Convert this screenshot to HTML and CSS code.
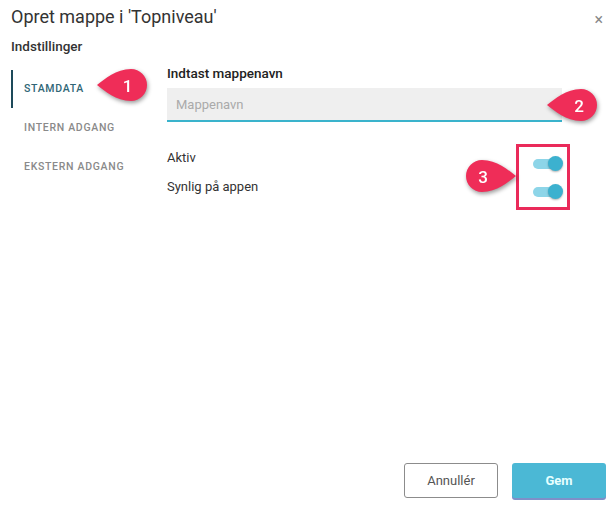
FILE: index.html
```html
<!DOCTYPE html>
<html lang="da">
<head>
  <meta charset="UTF-8" />
  <title>Opret mappe</title>
  <link rel="stylesheet" href="styles.css">
</head>
<body>
  <div class="dialog">
    <div class="dialog-head">
      <h2 class="title">Opret mappe i 'Topniveau'</h2>
      <span class="close">&times;</span>
    </div>
    <h3 class="subtitle">Indstillinger</h3>

    <div class="dialog-body">
      <nav class="tabs">
        <div class="tab active">STAMDATA
          <svg class="marker marker-1" width="56" height="40" viewBox="0 0 56 40">
            <path d="M1,17 C9,11 20,1 35,1 A16,16 0 0 1 35,33 C20,33 9,23 1,17 Z" />
            <text x="32" y="23.5">1</text>
          </svg>
        </div>
        <div class="tab">INTERN ADGANG</div>
        <div class="tab">EKSTERN ADGANG</div>
      </nav>

      <section class="fields">
        <label class="field-label" for="name">Indtast mappenavn</label>
        <div class="input-wrap">
          <input id="name" class="text-input" placeholder="Mappenavn">
          <svg class="marker marker-2" width="56" height="40" viewBox="0 0 56 40">
            <path d="M1,17 C9,11 20,1 35,1 A16,16 0 0 1 35,33 C20,33 9,23 1,17 Z" />
            <text x="33" y="23.5">2</text>
          </svg>
        </div>

        <div class="switches">
          <div class="switch-labels">
            <div class="switch-row">Aktiv</div>
            <div class="switch-row">Synlig på appen</div>
          </div>
          <div class="switch-box">
            <span class="toggle"><span class="thumb"></span></span>
            <span class="toggle"><span class="thumb"></span></span>
            <svg class="marker marker-3" width="56" height="40" viewBox="0 0 56 40">
              <path d="M55,17 C47,11 36,1 21,1 A16,16 0 0 0 21,33 C36,33 47,23 55,17 Z" />
              <text x="22" y="23.5">3</text>
            </svg>
          </div>
        </div>
      </section>
    </div>

    <div class="dialog-foot">
      <button class="btn btn-cancel">Annullér</button>
      <button class="btn btn-save">Gem</button>
    </div>
  </div>
</body>
</html>
```

FILE: styles.css
```css
body {
  margin: 0;
  font-family: Roboto, 'Noto Sans', sans-serif;
  background: #fff;
  color: #333;
}
.dialog {
  height: 510px;
  box-sizing: border-box;
  padding: 5px 10px 12px 11px;
  display: flex;
  flex-direction: column;
}
.dialog-head {
  display: flex;
  justify-content: space-between;
  align-items: center;
}
.title {
  margin: 0;
  font-size: 18px;
  font-weight: 400;
  line-height: 24px;
  color: #333;
}
.close {
  font-size: 16px;
  color: #888;
  margin-right: 3px;
  margin-top: 4px;
}
.subtitle {
  margin: 8px 0 0;
  font-size: 13.5px;
  font-weight: 500;
  line-height: 18px;
  color: #333;
}
.dialog-body {
  flex: 1;
  display: flex;
  margin-top: 15px;
}
.tabs {
  width: 156px;
  flex-shrink: 0;
}
.tab {
  position: relative;
  height: 38px;
  line-height: 38px;
  padding-left: 13px;
  margin-bottom: 1px;
  font-size: 10.5px;
  font-weight: 500;
  letter-spacing: 0.7px;
  color: #8a8a8a;
}
.tab.active {
  color: #2f6676;
  border-left: 2px solid #1d4a5a;
  padding-left: 11px;
}
.fields {
  flex: 1;
  padding-right: 44px;
}
.field-label {
  display: block;
  font-size: 13.5px;
  font-weight: 500;
  line-height: 18px;
  margin-top: -6px;
  color: #222;
}
.input-wrap {
  position: relative;
  margin-top: 6px;
}
.text-input {
  display: block;
  width: 100%;
  box-sizing: border-box;
  height: 34px;
  border: 0;
  border-bottom: 2px solid #3ab3cc;
  background: #efefef;
  padding: 0 9px;
  font-family: inherit;
  font-size: 13px;
  color: #333;
}
.text-input::placeholder {
  color: #aaa;
}
.switches {
  display: flex;
  justify-content: space-between;
  margin-top: 21px;
}
.switch-row {
  height: 29px;
  line-height: 29px;
  font-size: 13px;
  color: #333;
}
.switch-box {
  position: relative;
  box-sizing: border-box;
  width: 54px;
  height: 66px;
  border: 3px solid #ea2a5a;
  margin-top: 1px;
  margin-right: -8px;
  display: flex;
  flex-direction: column;
  align-items: flex-end;
  padding: 12px 6px 0 0;
  gap: 18px;
}
.toggle {
  position: relative;
  display: block;
  width: 28px;
  height: 10px;
  border-radius: 5px;
  background: #8dd5e8;
}
.thumb {
  position: absolute;
  right: -2px;
  top: -3px;
  width: 15px;
  height: 15px;
  border-radius: 50%;
  background: #3cb1cf;
  box-shadow: 0 1px 2px rgba(0, 0, 0, 0.3);
}
.marker {
  position: absolute;
  overflow: visible;
  filter: drop-shadow(1px 2px 2px rgba(0, 0, 0, 0.4));
}
.marker path {
  fill: #ef2d58;
}
.marker text {
  fill: #fff;
  font-family: Roboto, sans-serif;
  font-size: 17px;
  font-weight: 500;
  text-anchor: middle;
}
.marker-1 {
  left: 83px;
  top: -2px;
}
.marker-2 {
  left: 379px;
  top: 0;
}
.marker-3 {
  left: -58px;
  top: 12px;
}
.dialog-foot {
  display: flex;
  justify-content: flex-end;
  gap: 14px;
}
.btn {
  width: 94px;
  height: 35px;
  border-radius: 3px;
  font-family: inherit;
  font-size: 13px;
}
.btn-cancel {
  background: #fff;
  border: 1px solid #8c8c8c;
  color: #555;
}
.btn-save {
  background: #4bb8d5;
  border: 0;
  color: #e6ffff;
  font-weight: 700;
  box-shadow: 0 2px 0 #7e8fc8;
}
```
